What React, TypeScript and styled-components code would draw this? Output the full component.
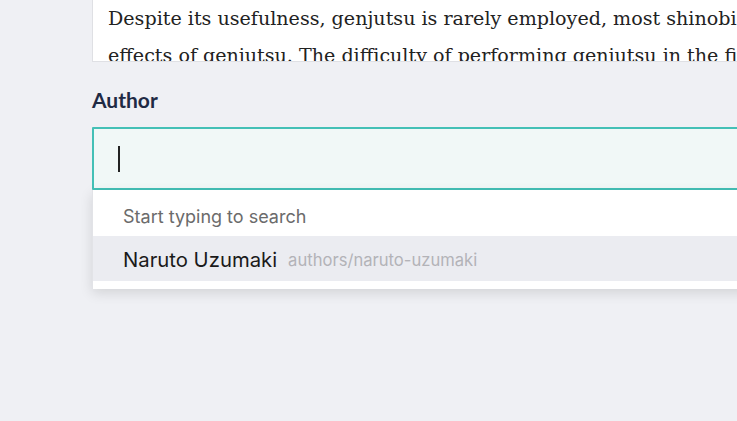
import React from 'react';
import styled, { createGlobalStyle } from 'styled-components';

const GlobalStyle = createGlobalStyle`
  html, body {
    margin: 0;
    padding: 0;
    background: #eff0f4;
    overflow: hidden;
  }
`;

const Page = styled.div`
  width: 737px;
  height: 421px;
  padding-left: 92px;
  box-sizing: border-box;
  overflow: hidden;
  display: flex;
  flex-direction: column;
`;

const Editor = styled.div`
  height: 62px;
  width: 700px;
  box-sizing: border-box;
  background: #ffffff;
  border: 1px solid #dfe0e4;
  border-top: none;
  overflow: hidden;
  padding: 0 0 0 15px;
`;

const Prose = styled.p`
  margin: 0;
  font-family: 'DejaVu Serif', serif;
  font-size: 19.1px;
  line-height: 37px;
  color: #222222;
  white-space: nowrap;
`;

const Field = styled.div`
  display: flex;
  flex-direction: column;
  margin-top: 26px;
`;

const Label = styled.label`
  font-family: 'Lato', sans-serif;
  font-weight: 700;
  font-size: 21px;
  color: #1f2a44;
  line-height: 24px;
  margin-bottom: 15px;
`;

const InputBox = styled.div`
  width: 700px;
  height: 63px;
  box-sizing: border-box;
  border: 2px solid #44c0b6;
  border-radius: 1px;
  background: #f1f8f7;
  display: flex;
  align-items: center;
  padding-left: 24px;
`;

const Caret = styled.span`
  width: 2px;
  height: 26px;
  background: #222;
`;

const Menu = styled.div`
  width: 700px;
  background: #ffffff;
  border-left: 1px solid #e2e3e7;
  box-shadow: 0 4px 12px rgba(0, 0, 0, 0.12);
  padding-bottom: 8px;
  font-family: 'Inter', sans-serif;
`;

const Hint = styled.div`
  height: 46px;
  display: flex;
  align-items: center;
  padding: 6px 0 0 30px;
  box-sizing: border-box;
  font-size: 18px;
  color: #6b6b6b;
`;

const Option = styled.div<{ $active?: boolean }>`
  height: 45px;
  display: flex;
  align-items: center;
  gap: 11px;
  padding: 2px 0 0 30px;
  box-sizing: border-box;
  background: ${(p) => (p.$active ? '#ebecf1' : '#ffffff')};
`;

const OptionTitle = styled.span`
  font-size: 20.3px;
  color: #1a1a1a;
`;

const OptionPath = styled.span`
  font-size: 16.6px;
  color: #b3b3b8;
`;

const App: React.FC = () => (
  <>
    <GlobalStyle />
    <Page>
      <Editor>
        <Prose>
          Despite its usefulness, genjutsu is rarely employed, most shinobi being able to
          <br />
          effects of genjutsu. The difficulty of performing genjutsu in the first place
        </Prose>
      </Editor>
      <Field>
        <Label>Author</Label>
        <InputBox>
          <Caret />
        </InputBox>
        <Menu>
          <Hint>Start typing to search</Hint>
          <Option $active>
            <OptionTitle>Naruto Uzumaki</OptionTitle>
            <OptionPath>authors/naruto-uzumaki</OptionPath>
          </Option>
        </Menu>
      </Field>
    </Page>
  </>
);

export default App;
